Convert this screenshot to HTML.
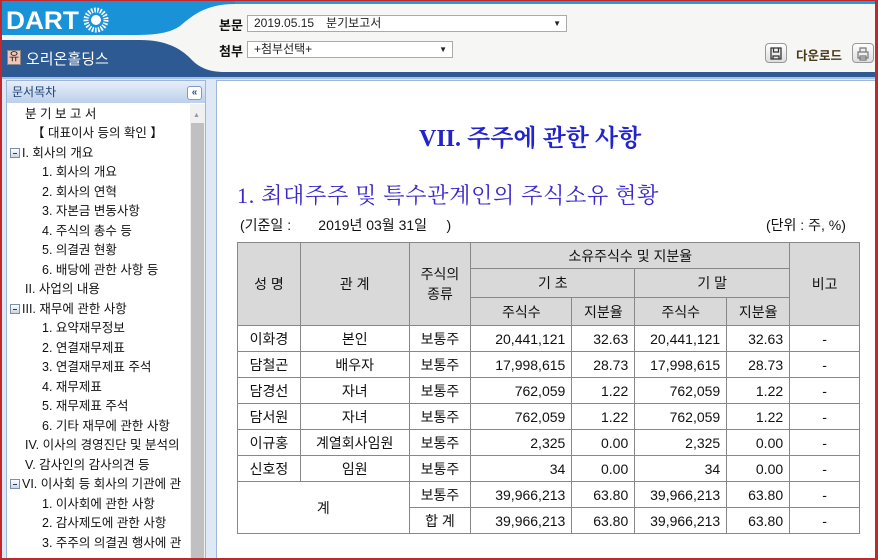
<!DOCTYPE html>
<html><head><meta charset="utf-8"><style>
*{margin:0;padding:0;box-sizing:border-box}
body{width:878px;height:560px;overflow:hidden;background:#dfe8f5;font-family:"Liberation Sans","Noto Sans CJK KR",sans-serif;position:relative}
.abs{position:absolute}
.tree div{position:absolute;font-size:12.5px;color:#111;white-space:nowrap;height:19px;line-height:19px}
.minus{display:inline-block;width:10px;height:10px;border:1px solid #7a8fa8;background:linear-gradient(#fff,#c9d6e6);position:relative;vertical-align:-1px;margin-right:2px}
.minus:after{content:"";position:absolute;left:2px;right:2px;top:4px;height:1px;background:#2a3a66}
table{border-collapse:collapse;position:absolute;left:237px;top:242px;width:623px;font-size:14px;color:#111}
td{border:1px solid #888;text-align:center;height:26px;padding:0 6px}
th{border:1px solid #888;background:#d9d9d9;font-weight:normal;height:27px}
.r{text-align:right}
</style></head><body>
<div class="abs" style="left:0;top:0;width:878px;height:72px;background:#f6f6f4"></div>
<div class="abs" style="left:0;top:0;width:878px;height:4px;background:#1aa2e0"></div>
<svg class="abs" style="left:0;top:0" width="240" height="72">
<path d="M0 0 H235 V4 C205 4 192 16 180 26 C170 33 155 35 135 35 H0 Z" fill="#1a92d8"/>
<path d="M0 40 H140 C165 40 180 48 190 58 C198 67 208 72 225 72 H0 Z" fill="#2d5a92"/>
</svg>
<div class="abs" style="left:6px;top:7px;font:bold 25px 'Liberation Sans',sans-serif;color:#fff;transform:scaleX(1.05);transform-origin:left">DART</div>
<svg class="abs" style="left:83px;top:7px" width="26" height="26"><circle cx="13" cy="13" r="10" fill="none" stroke="#fff" stroke-width="5" stroke-dasharray="1.6 1.4"/><circle cx="13" cy="13" r="5" fill="#fff"/></svg>
<div class="abs" style="left:7px;top:50px;width:14px;height:15px;background:#f3c6b8;border:1px solid #888;font-size:11px;line-height:13px;text-align:center;color:#222">유</div>
<div class="abs" style="left:26px;top:48px;font-size:15px;color:#fff">오리온홀딩스</div>
<div class="abs" style="left:219px;top:15px;font-size:13px;font-weight:bold;color:#111">본문</div>
<div class="abs" style="left:247px;top:15px;width:320px;height:17px;background:#fff;border:1px solid #aaa;font-size:12px;line-height:15px;padding-left:6px;color:#222">2019.05.15　분기보고서<span style="position:absolute;right:5px;font-size:8px">▼</span></div>
<div class="abs" style="left:219px;top:41px;font-size:13px;font-weight:bold;color:#111">첨부</div>
<div class="abs" style="left:247px;top:41px;width:206px;height:17px;background:#fff;border:1px solid #aaa;font-size:12px;line-height:15px;padding-left:6px;color:#222">+첨부선택+<span style="position:absolute;right:5px;font-size:8px">▼</span></div>
<div class="abs" style="left:765px;top:43px;width:22px;height:20px;border:1px solid #999;border-radius:4px;background:linear-gradient(#fff,#ddd)"><svg width="20" height="18"><path d="M5 4h10v11H5z M7.5 4v4h5V4 M7 15v-3h6v3" fill="none" stroke="#333" stroke-width="1.3"/></svg></div>
<div class="abs" style="left:796px;top:45px;font-size:12.5px;font-weight:bold;color:#4a3a1a">다운로드</div>
<div class="abs" style="left:852px;top:43px;width:22px;height:20px;border:1px solid #999;border-radius:4px;background:linear-gradient(#fff,#ddd)"><svg width="20" height="18"><path d="M7 4h6v4H7z M5 8h10v6H5z M7 12h6v4H7z" fill="#eee" stroke="#777" stroke-width="1.2"/></svg></div>
<div class="abs" style="left:0;top:72px;width:878px;height:5px;background:#2d5a92"></div>
<div class="abs" style="left:0;top:77px;width:878px;height:2px;background:#a9c2e2"></div>
<div class="abs" style="left:6px;top:80px;width:200px;height:480px;background:#fff;border:1px solid #9db6d9"></div>
<div class="abs" style="left:7px;top:81px;width:198px;height:22px;background:linear-gradient(#e6eef9,#bcd0ec);font-size:12px;line-height:22px;padding-left:5px;color:#1e3f74">문서목차</div>
<div class="abs" style="left:187px;top:86px;width:15px;height:14px;border:1px solid #7d9bc6;border-radius:3px;background:#fff;font-size:10px;line-height:11px;text-align:center;color:#2a4f8a;font-weight:bold">«</div>
<div class="abs" style="left:190px;top:104px;width:15px;height:456px;background:#f0f0f0"></div>
<div class="abs" style="left:191px;top:123px;width:13px;height:437px;background:#c0c0c0"></div>
<div class="abs" style="left:193px;top:112px;font-size:7px;color:#999">▲</div>
<div class="tree">
<div style="left:25px;top:105px">분 기 보 고 서</div>
<div style="left:32px;top:124px">【 대표이사 등의 확인 】</div>
<div style="left:10px;top:144px"><span class="minus"></span>I. 회사의 개요</div>
<div style="left:42px;top:163px">1. 회사의 개요</div>
<div style="left:42px;top:183px">2. 회사의 연혁</div>
<div style="left:42px;top:202px">3. 자본금 변동사항</div>
<div style="left:42px;top:222px">4. 주식의 총수 등</div>
<div style="left:42px;top:241px">5. 의결권 현황</div>
<div style="left:42px;top:261px">6. 배당에 관한 사항 등</div>
<div style="left:25px;top:280px">II. 사업의 내용</div>
<div style="left:10px;top:300px"><span class="minus"></span>III. 재무에 관한 사항</div>
<div style="left:42px;top:319px">1. 요약재무정보</div>
<div style="left:42px;top:339px">2. 연결재무제표</div>
<div style="left:42px;top:358px">3. 연결재무제표 주석</div>
<div style="left:42px;top:378px">4. 재무제표</div>
<div style="left:42px;top:397px">5. 재무제표 주석</div>
<div style="left:42px;top:417px">6. 기타 재무에 관한 사항</div>
<div style="left:25px;top:436px">IV. 이사의 경영진단 및 분석의</div>
<div style="left:25px;top:456px">V. 감사인의 감사의견 등</div>
<div style="left:10px;top:475px"><span class="minus"></span>VI. 이사회 등 회사의 기관에 관</div>
<div style="left:42px;top:495px">1. 이사회에 관한 사항</div>
<div style="left:42px;top:514px">2. 감사제도에 관한 사항</div>
<div style="left:42px;top:534px">3. 주주의 의결권 행사에 관</div>
</div>
<div class="abs" style="left:188px;top:104px;width:2px;height:456px;background:#fff"></div>
<div class="abs" style="left:216px;top:80px;width:662px;height:480px;background:#fff;border:1px solid #9db6d9"></div>
<div class="abs" style="left:419px;top:118px;font:bold 24px 'Liberation Serif','Noto Serif CJK SC',serif;color:#2323cc">VII. 주주에 관한 사항</div>
<div class="abs" style="left:237px;top:179px;font:22px 'Liberation Serif','Noto Serif CJK SC',serif;color:#3a28cc;letter-spacing:0.7px">1. 최대주주 및 특수관계인의 주식소유 현황</div>
<div class="abs" style="left:240px;top:215px;font-size:14px;color:#111;white-space:pre">(기준일 :       2019년 03월 31일     )</div>
<div class="abs" style="left:766px;top:215px;font-size:14px;color:#111">(단위 : 주, %)</div>
<table>
<tr><th rowspan="3" style="width:63px">성 명</th><th rowspan="3" style="width:109px">관 계</th><th rowspan="3" style="width:62px">주식의<br>종류</th><th colspan="4" style="height:26px">소유주식수 및 지분율</th><th rowspan="3" style="width:70px">비고</th></tr>
<tr><th colspan="2" style="height:29px">기 초</th><th colspan="2">기 말</th></tr>
<tr><th style="width:101px;height:28px">주식수</th><th style="width:63px">지분율</th><th style="width:92px">주식수</th><th style="width:63px">지분율</th></tr>
<tr><td>이화경</td><td>본인</td><td>보통주</td><td class="r">20,441,121</td><td class="r">32.63</td><td class="r">20,441,121</td><td class="r">32.63</td><td>-</td></tr>
<tr><td>담철곤</td><td>배우자</td><td>보통주</td><td class="r">17,998,615</td><td class="r">28.73</td><td class="r">17,998,615</td><td class="r">28.73</td><td>-</td></tr>
<tr><td>담경선</td><td>자녀</td><td>보통주</td><td class="r">762,059</td><td class="r">1.22</td><td class="r">762,059</td><td class="r">1.22</td><td>-</td></tr>
<tr><td>담서원</td><td>자녀</td><td>보통주</td><td class="r">762,059</td><td class="r">1.22</td><td class="r">762,059</td><td class="r">1.22</td><td>-</td></tr>
<tr><td>이규홍</td><td>계열회사임원</td><td>보통주</td><td class="r">2,325</td><td class="r">0.00</td><td class="r">2,325</td><td class="r">0.00</td><td>-</td></tr>
<tr><td>신호정</td><td>임원</td><td>보통주</td><td class="r">34</td><td class="r">0.00</td><td class="r">34</td><td class="r">0.00</td><td>-</td></tr>
<tr><td colspan="2" rowspan="2">계</td><td>보통주</td><td class="r">39,966,213</td><td class="r">63.80</td><td class="r">39,966,213</td><td class="r">63.80</td><td>-</td></tr>
<tr><td>합 계</td><td class="r">39,966,213</td><td class="r">63.80</td><td class="r">39,966,213</td><td class="r">63.80</td><td>-</td></tr>
</table>
<div class="abs" style="left:0;top:0;width:878px;height:560px;border:2px solid #c0282e;border-top-width:1px;border-right-width:3px;pointer-events:none"></div>
</body></html>
